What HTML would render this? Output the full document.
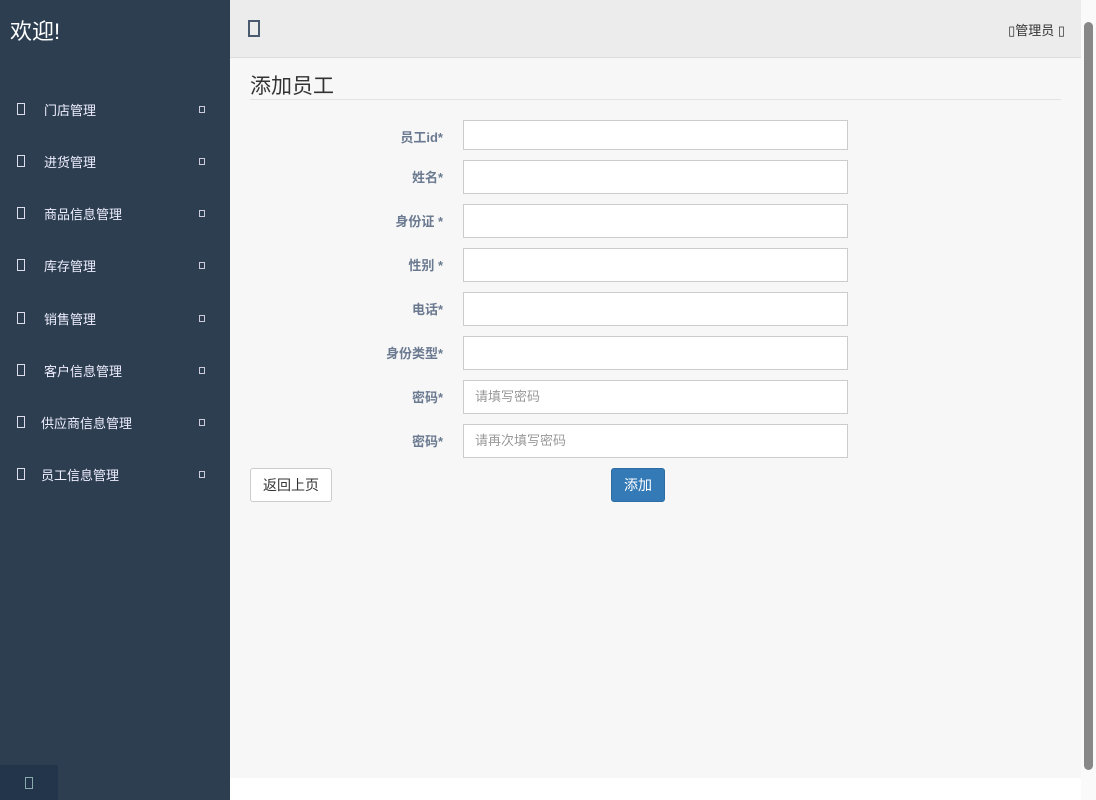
<!DOCTYPE html>
<html><head><meta charset="utf-8"><style>
*{box-sizing:border-box;margin:0;padding:0}
body{width:1096px;height:800px;overflow:hidden;background:#fff;font-family:"Liberation Sans","Noto Sans CJK SC",sans-serif;position:relative}
.side{position:absolute;left:0;top:0;width:230px;height:800px;background:#2c3e50;color:#fff}
.side h1{position:absolute;left:10px;top:14px;font-size:22px;font-weight:normal}
.item{position:absolute;left:0;width:230px;font-size:13px;color:#eef}
.item .ic{position:absolute;left:17px;top:-7px;width:8px;height:12px;border:1.5px solid #dde}
.item .t{position:absolute;top:-10px}
.item .ar{position:absolute;left:199px;top:-4px;width:6px;height:7px;border:1px solid #ccd}
.foot{position:absolute;left:0;top:765px;width:58px;height:35px;background:#22354a}
.foot i{position:absolute;left:25px;top:12px;width:8px;height:12px;border:1.5px solid #8aa}
.head{position:absolute;left:230px;top:0;width:851px;height:58px;background:#ececec;border-bottom:1px solid #dcdcdc}
.head .ic{position:absolute;left:18px;top:20px;width:12px;height:17px;border:2px solid #4a5b70}
.head .u{position:absolute;right:16px;top:20px;font-size:13px;color:#333}
.main{position:absolute;left:230px;top:58px;width:851px;height:720px;background:#f7f7f7}
.main h2{position:absolute;left:20px;top:12px;font-size:21px;font-weight:normal;color:#333}
.hr{position:absolute;left:20px;top:41px;width:811px;height:1px;background:#e3e3e3}
.lab{position:absolute;width:213px;text-align:right;font-size:13px;font-weight:bold;color:#6b7a90}
.inp{position:absolute;left:233px;width:385px;background:#fff;border:1px solid #ccc;font-size:13px;color:#999;padding:0 11px}
.btn{position:absolute;top:410px;height:34px;font-size:14px;border-radius:3px;line-height:32px;text-align:center}
.sb{position:absolute;left:1081px;top:0;width:15px;height:800px;background:#fafafa}
.sb .th{position:absolute;left:3px;top:22px;width:9px;height:748px;background:#888;border-radius:5px}
</style></head><body>
<div class="side"><h1>欢迎!</h1>
<div class="item" style="top:110px"><i class="ic"></i><span class="t" style="left:44px">门店管理</span><i class="ar"></i></div>
<div class="item" style="top:162px"><i class="ic"></i><span class="t" style="left:44px">进货管理</span><i class="ar"></i></div>
<div class="item" style="top:214px"><i class="ic"></i><span class="t" style="left:44px">商品信息管理</span><i class="ar"></i></div>
<div class="item" style="top:266px"><i class="ic"></i><span class="t" style="left:44px">库存管理</span><i class="ar"></i></div>
<div class="item" style="top:319px"><i class="ic"></i><span class="t" style="left:44px">销售管理</span><i class="ar"></i></div>
<div class="item" style="top:371px"><i class="ic"></i><span class="t" style="left:44px">客户信息管理</span><i class="ar"></i></div>
<div class="item" style="top:423px"><i class="ic"></i><span class="t" style="left:41px">供应商信息管理</span><i class="ar"></i></div>
<div class="item" style="top:475px"><i class="ic"></i><span class="t" style="left:41px">员工信息管理</span><i class="ar"></i></div>
<div class="foot"><i></i></div>
</div>
<div class="head"><i class="ic"></i><span class="u">▯管理员 ▯</span></div>
<div class="main"><h2>添加员工</h2><div class="hr"></div>
<div class="lab" style="top:69px">员工id*</div><div class="inp" style="top:62px;height:30px"></div>
<div class="lab" style="top:109px">姓名*</div><div class="inp" style="top:102px;height:34px"></div>
<div class="lab" style="top:153px">身份证 *</div><div class="inp" style="top:146px;height:34px"></div>
<div class="lab" style="top:197px">性别 *</div><div class="inp" style="top:190px;height:34px"></div>
<div class="lab" style="top:241px">电话*</div><div class="inp" style="top:234px;height:34px"></div>
<div class="lab" style="top:285px">身份类型*</div><div class="inp" style="top:278px;height:34px"></div>
<div class="lab" style="top:329px">密码*</div><div class="inp" style="top:322px;height:34px;line-height:32px">请填写密码</div>
<div class="lab" style="top:373px">密码*</div><div class="inp" style="top:366px;height:34px;line-height:32px">请再次填写密码</div>
<div class="btn" style="left:20px;width:82px;background:#fff;border:1px solid #ccc;color:#333">返回上页</div>
<div class="btn" style="left:381px;width:54px;background:#337ab7;border:1px solid #2e6da4;color:#fff">添加</div>
</div>
<div class="sb"><div class="th"></div></div>
</body></html>
